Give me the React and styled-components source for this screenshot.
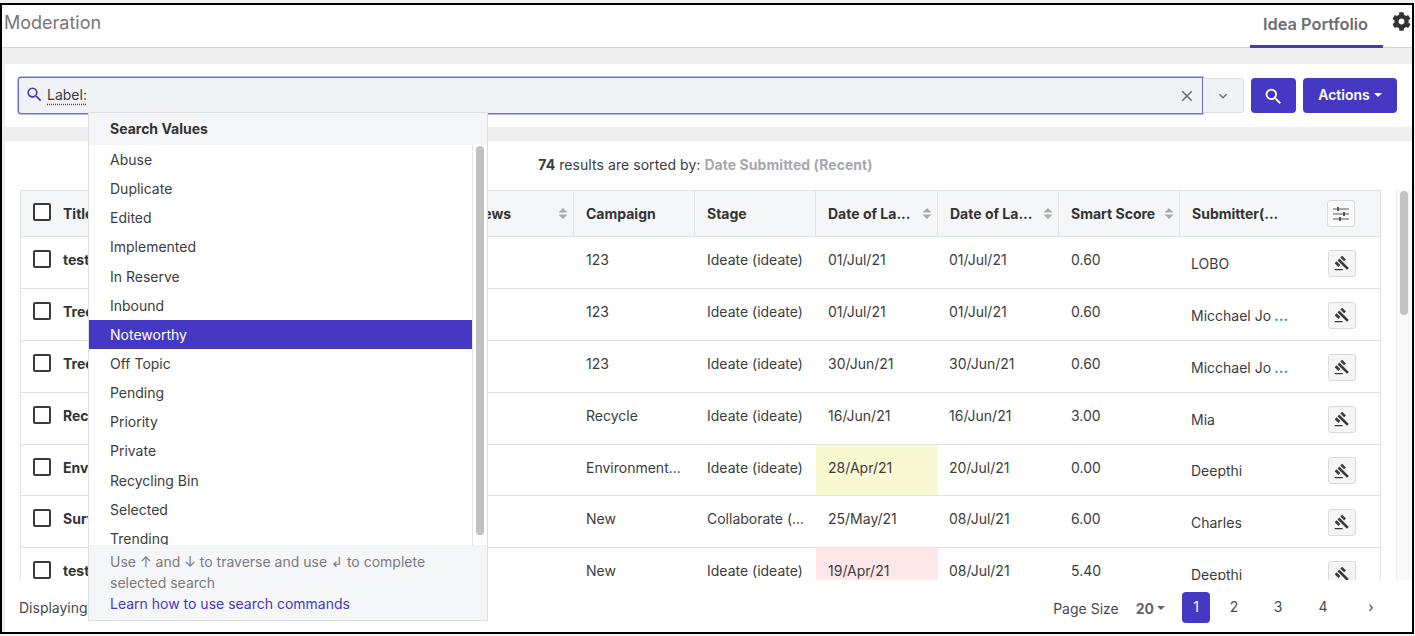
import React from 'react'
import styled, { createGlobalStyle } from 'styled-components'
import { FaCog } from 'react-icons/fa'
import { MdGavel, MdSearch, MdClose, MdExpandMore } from 'react-icons/md'

const primary = '#4539c3'
const line = '#e1e2e6'
const ink = '#3c3c40'

const GlobalStyle = createGlobalStyle`
  html, body {
    margin: 0;
    background: #f2f2f2;
    font-family: Inter, "Liberation Sans", sans-serif;
    color: ${ink};
  }
  * { box-sizing: border-box; }
`

const Frame = styled.div`
  margin-top: 3px;
  width: 1414px;
  height: 631px;
  border: 2px solid #000;
  background: #efefef;
  overflow: hidden;
  display: flex;
  flex-direction: column;
`

const TopBar = styled.header`
  height: 43px;
  flex: none;
  background: #fff;
  border-bottom: 1px solid #d6d6da;
  display: flex;
  align-items: center;
  padding-left: 2px;
`

const PageTitle = styled.div`
  flex: 1;
  margin-bottom: 8px;
  font-size: 18px;
  color: #76767b;
`

const TabLink = styled.div`
  width: 133px;
  height: 42px;
  margin-bottom: -1px;
  padding-right: 2px;
  border-bottom: 3px solid ${primary};
  text-align: center;
  line-height: 37px;
  font-size: 16.4px;
  font-weight: 600;
  color: #6d6d72;
`

const GearWrap = styled.div`
  width: 29px;
  height: 42px;
  padding: 7px 0 0 9px;
  font-size: 19px;
  color: #333;
`

const SearchCard = styled.section`
  position: relative;
  flex: none;
  height: 63px;
  margin: 16px 0 14px 3px;
  background: #fff;
  border-radius: 3px;
  display: flex;
  align-items: center;
  padding: 0 14px 0 13px;
`

const SearchInput = styled.div`
  width: 1185px;
  height: 37px;
  background: #f1f2f6;
  border: 1px solid #6f6de0;
  box-shadow: 0 0 0 0.5px #6f6de0;
  border-radius: 3px 0 0 3px;
  display: flex;
  align-items: center;
  padding: 0 6px 3px 6px;
  color: ${primary};
  font-size: 19px;
`

const LabelText = styled.span`
  flex: 1;
  margin-left: 3px;
  font-size: 14px;
  color: ${ink};
  span {
    text-decoration: underline dotted #c01818;
    text-underline-offset: 4px;
  }
`

const ClearIcon = styled(MdClose)`
  color: #6a6a6e;
  font-size: 18px;
  margin-top: 3px;
`

const ToggleBox = styled.div`
  width: 41px;
  height: 35px;
  background: #f1f2f6;
  border: 1px solid #dcdde2;
  border-left: 0;
  border-radius: 0 3px 3px 0;
  display: flex;
  align-items: center;
  justify-content: center;
  color: #6a6a6e;
  font-size: 16px;
`

const PrimaryButton = styled.button`
  height: 35px;
  margin-left: 7px;
  padding: 0 0 2px;
  width: ${({ $w }) => $w}px;
  background: ${primary};
  color: #fff;
  border: 0;
  border-radius: 4px;
  font-family: inherit;
  font-size: 14px;
  font-weight: 600;
  display: flex;
  align-items: center;
  justify-content: center;
  gap: 4px;
`

const SearchButton = styled(PrimaryButton)`
  padding: 2px 0 0;
`

const Caret = styled.i`
  display: inline-block;
  border-top: 4px solid currentColor;
  border-left: 4px solid transparent;
  border-right: 4px solid transparent;
`

const Dropdown = styled.div`
  position: absolute;
  left: 83px;
  top: 48px;
  width: 400px;
  height: 509px;
  background: #fff;
  border: 1px solid #dfdfe3;
  display: flex;
  flex-direction: column;
  z-index: 5;
`

const DropHead = styled.div`
  height: 32px;
  flex: none;
  background: #f5f6f8;
  padding-left: 21px;
  line-height: 31px;
  font-size: 14px;
  font-weight: 700;
  color: #333;
`

const DropBody = styled.div`
  flex: 1;
  min-height: 0;
  display: flex;
  overflow: hidden;
`

const OptionList = styled.ul`
  flex: 1;
  list-style: none;
  margin: 0;
  padding: 0;
  overflow: hidden;
  border-right: 1px solid #e6e6e9;
`

const Option = styled.li`
  height: 29.15px;
  line-height: 29px;
  padding-left: 21px;
  font-size: 14px;
  background: ${({ $active }) => ($active ? primary : 'transparent')};
  color: ${({ $active }) => ($active ? '#fff' : ink)};
`

const DropTrack = styled.div`
  width: 14px;
  flex: none;
  padding: 1px 3px 10px 3px;
`

const Thumb = styled.div`
  height: ${({ $h }) => $h}px;
  background: #c1c1c1;
  border-radius: 4px;
`

const DropFoot = styled.div`
  height: 75px;
  flex: none;
  background: #f5f6f8;
  padding: 6px 21px 0;
  font-size: 14px;
  line-height: 21px;
  color: #7b7b80;
`

const LearnLink = styled.a`
  color: ${primary};
  display: block;
`

const MainPanel = styled.section`
  flex: 1;
  min-height: 0;
  margin-left: 3px;
  background: #fff;
  border-radius: 3px 3px 0 0;
  display: flex;
  flex-direction: column;
`

const ScrollRegion = styled.div`
  flex: 1;
  min-height: 0;
  display: flex;
`

const TableColumn = styled.div`
  flex: 1;
  min-width: 0;
  padding: 0 15px;
  display: flex;
  flex-direction: column;
`

const ResultLine = styled.div`
  height: 49px;
  flex: none;
  padding: 15px 0 0 10px;
  text-align: center;
  font-size: 14px;
  letter-spacing: 0.06px;
  b { font-weight: 700; }
`

const SortName = styled.span`
  font-weight: 700;
  color: #a5a8ae;
`

const TableClip = styled.div`
  flex: 1;
  min-height: 0;
  overflow: hidden;
  border: 1px solid ${line};
  border-bottom: 0;
`

const Table = styled.table`
  width: 1360px;
  table-layout: fixed;
  border-collapse: separate;
  border-spacing: 0;
`

const HeadCell = styled.th`
  height: 46px;
  padding: 0 5px 0 12px;
  background: #f5f6f8;
  border-bottom: 1px solid ${line};
  border-right: 1px solid ${line};
  text-align: left;
  font-size: 14px;
  font-weight: 700;
  color: #333;
  white-space: nowrap;
  &:last-child { border-right: 0; }
`

const HeadInner = styled.div`
  display: flex;
  align-items: center;
  justify-content: space-between;
`

const Cell = styled.td`
  height: ${({ $h }) => $h}px;
  padding: 0 12px 6px;
  border-bottom: 1px solid ${line};
  font-size: 14px;
  white-space: nowrap;
  overflow: hidden;
  background: ${({ $tint }) => $tint || 'transparent'};
`

const TitleCell = styled(Cell)`
  font-weight: 700;
  color: #333;
`

const LastDateCell = styled(Cell)`
  padding-left: 11px;
`

const SubmitterCell = styled(Cell)`
  padding: 1px 12px 0 11px;
`

const CheckRow = styled.div`
  display: flex;
  align-items: center;
  gap: 12px;
`

const Check = styled.span`
  width: 18px;
  height: 18px;
  flex: none;
  margin-bottom: ${({ $raise }) => $raise}px;
  border: 2px solid #3a3a3d;
  border-radius: 2px;
  background: #fff;
`

const More = styled.span`
  color: #1a8ad8;
  font-weight: 700;
  margin-left: 3px;
`

const SubmitterInner = styled.div`
  display: flex;
  align-items: center;
  justify-content: space-between;
  padding-right: ${({ $end }) => $end}px;
`

const IconButton = styled.span`
  width: 28px;
  height: 27px;
  flex: none;
  border: 1px solid #dadade;
  border-radius: 3px;
  background: ${({ $plain }) => ($plain ? '#fbfbfc' : '#f5f5f7')};
  display: flex;
  align-items: center;
  justify-content: center;
  color: #3a3a3e;
  font-size: 16px;
`

const SideTrack = styled.div`
  width: 16px;
  flex: none;
  margin-top: 49px;
  background: #f9f9f9;
  border-left: 1px solid #ececee;
  padding: 1px 4px 0 3px;
`

const PageFoot = styled.footer`
  height: 52px;
  flex: none;
  display: flex;
  align-items: center;
  padding: 2px 0 0 14px;
  font-size: 14px;
  color: #4a4a4e;
`

const FootLeft = styled.div`
  flex: 1;
`

const PageSizeLabel = styled.span`
  margin: 2px 17px 0 0;
`

const PageSizeValue = styled.span`
  display: flex;
  align-items: center;
  gap: 3px;
  margin: 2px 17px 0 0;
  font-weight: 700;
  color: #66666a;
`

const PageBtn = styled.span`
  width: 28px;
  margin-right: ${({ $gap }) => $gap}px;
  height: 31px;
  padding-bottom: 2px;
  border-radius: 4px;
  display: flex;
  align-items: center;
  justify-content: center;
  background: ${({ $active }) => ($active ? primary : 'transparent')};
  color: ${({ $active }) => ($active ? '#fff' : '#4a4a4e')};
`

function SortIcon() {
  return (
    <svg width="10" height="13" viewBox="0 0 10 13" style={{ flex: 'none' }}>
      <path d="M5 1 L9.5 5.5 H0.5 Z M0.5 7.5 H9.5 L5 12 Z" fill="#a9a9ae" />
    </svg>
  )
}

function TuneIcon() {
  return (
    <svg width="18" height="16" viewBox="0 0 18 16" fill="none" stroke="#55555a" strokeWidth="1.2">
      <path d="M1 3 H17 M1 8 H17 M1 13 H17" />
      <path d="M6 1 V5 M12 6 V10 M8 11 V15" strokeWidth="2" />
    </svg>
  )
}

const columns = [
  { label: 'Title', width: 421 },
  { label: 'Reviews', width: 132, sort: true },
  { label: 'Campaign', width: 121 },
  { label: 'Stage', width: 121 },
  { label: 'Date of La...', width: 122, sort: true },
  { label: 'Date of La...', width: 121, sort: true },
  { label: 'Smart Score', width: 121, sort: true },
]

const rows = [
  { h: 52, title: 'test', campaign: '123', stage: 'Ideate (ideate)', first: '01/Jul/21', last: '01/Jul/21', score: '0.60', who: 'LOBO' },
  { h: 52, title: 'Tree', campaign: '123', stage: 'Ideate (ideate)', first: '01/Jul/21', last: '01/Jul/21', score: '0.60', who: 'Micchael Jo', more: true },
  { h: 52, title: 'Tree', campaign: '123', stage: 'Ideate (ideate)', first: '30/Jun/21', last: '30/Jun/21', score: '0.60', who: 'Micchael Jo', more: true },
  { h: 52, title: 'Recycle', campaign: 'Recycle', stage: 'Ideate (ideate)', first: '16/Jun/21', last: '16/Jun/21', score: '3.00', who: 'Mia' },
  { h: 51, title: 'Environment', campaign: 'Environment...', stage: 'Ideate (ideate)', first: '28/Apr/21', tint: '#f9f9d2', last: '20/Jul/21', score: '0.00', who: 'Deepthi' },
  { h: 52, title: 'Survey', campaign: 'New', stage: 'Collaborate (...', first: '25/May/21', last: '08/Jul/21', score: '6.00', who: 'Charles' },
  { h: 52, title: 'test', campaign: 'New', stage: 'Ideate (ideate)', first: '19/Apr/21', tint: '#ffe6e8', last: '08/Jul/21', score: '5.40', who: 'Deepthi' },
]

const options = [
  'Abuse', 'Duplicate', 'Edited', 'Implemented', 'In Reserve', 'Inbound', 'Noteworthy',
  'Off Topic', 'Pending', 'Priority', 'Private', 'Recycling Bin', 'Selected', 'Trending',
]

export default function App() {
  return (
    <Frame>
      <GlobalStyle />
      <TopBar>
        <PageTitle>Moderation</PageTitle>
        <TabLink>Idea Portfolio</TabLink>
        <GearWrap><FaCog /></GearWrap>
      </TopBar>

      <SearchCard>
        <SearchInput>
          <MdSearch />
          <LabelText><span>Label:</span></LabelText>
          <ClearIcon />
        </SearchInput>
        <ToggleBox><MdExpandMore /></ToggleBox>
        <SearchButton $w={45}><MdSearch size={21} /></SearchButton>
        <PrimaryButton $w={94}>Actions <Caret /></PrimaryButton>

        <Dropdown>
          <DropHead>Search Values</DropHead>
          <DropBody>
            <OptionList>
              {options.map(o => (
                <Option key={o} $active={o === 'Noteworthy'}>{o}</Option>
              ))}
            </OptionList>
            <DropTrack><Thumb $h={389} /></DropTrack>
          </DropBody>
          <DropFoot>
            Use ↑ and ↓ to traverse and use ↲ to complete selected search
            <LearnLink>Learn how to use search commands</LearnLink>
          </DropFoot>
        </Dropdown>
      </SearchCard>

      <MainPanel>
        <ScrollRegion>
          <TableColumn>
            <ResultLine>
              <b>74</b> results are sorted by: <SortName>Date Submitted (Recent)</SortName>
            </ResultLine>
            <TableClip>
              <Table>
                <colgroup>
                  {columns.map((c, i) => <col key={i} style={{ width: c.width }} />)}
                  <col style={{ width: 201 }} />
                </colgroup>
                <thead>
                  <tr>
                    {columns.map((c, i) => (
                      <HeadCell key={i}>
                        <HeadInner>
                          {i === 0 ? <CheckRow><Check $raise={3} />{c.label}</CheckRow> : <span>{c.label}</span>}
                          {c.sort && <SortIcon />}
                        </HeadInner>
                      </HeadCell>
                    ))}
                    <HeadCell>
                      <SubmitterInner $end={21}>
                        <span>Submitter(...</span>
                        <IconButton $plain><TuneIcon /></IconButton>
                      </SubmitterInner>
                    </HeadCell>
                  </tr>
                </thead>
                <tbody>
                  {rows.map((r, i) => (
                    <tr key={i}>
                      <TitleCell $h={r.h}><CheckRow><Check $raise={1} />{r.title}</CheckRow></TitleCell>
                      <Cell $h={r.h} />
                      <Cell $h={r.h}>{r.campaign}</Cell>
                      <Cell $h={r.h}>{r.stage}</Cell>
                      <Cell $h={r.h} $tint={r.tint}>{r.first}</Cell>
                      <LastDateCell $h={r.h}>{r.last}</LastDateCell>
                      <Cell $h={r.h}>{r.score}</Cell>
                      <SubmitterCell $h={r.h}>
                        <SubmitterInner $end={13}>
                          <span>{r.who}{r.more && <More>...</More>}</span>
                          <IconButton><MdGavel /></IconButton>
                        </SubmitterInner>
                      </SubmitterCell>
                    </tr>
                  ))}
                </tbody>
              </Table>
            </TableClip>
          </TableColumn>
          <SideTrack><Thumb $h={124} /></SideTrack>
        </ScrollRegion>

        <PageFoot>
          <FootLeft>Displaying 1 - 20 of 74</FootLeft>
          <PageSizeLabel>Page Size</PageSizeLabel>
          <PageSizeValue>20 <Caret /></PageSizeValue>
          <PageBtn $active $gap={10}>1</PageBtn>
          <PageBtn $gap={16}>2</PageBtn>
          <PageBtn $gap={17}>3</PageBtn>
          <PageBtn $gap={20}>4</PageBtn>
          <PageBtn $gap={27}>›</PageBtn>
        </PageFoot>
      </MainPanel>
    </Frame>
  )
}
